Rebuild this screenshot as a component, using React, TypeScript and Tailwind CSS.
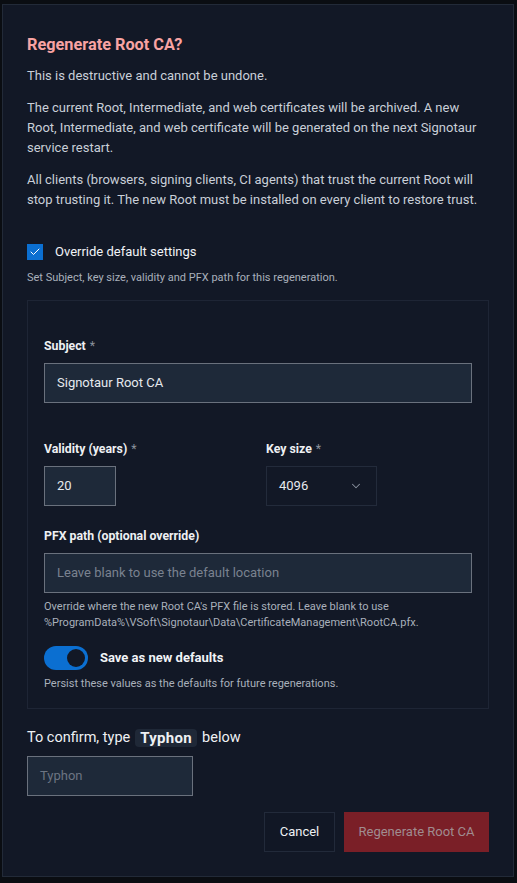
import { Check, ChevronDown } from "lucide-react";

const font = { fontFamily: 'Roboto, "Noto Sans", sans-serif' };

const labelCls = "text-[12.3px] font-bold leading-[18px] text-[#eef0f3]";
const inputBase = "flex h-10 items-center border border-[#6a717d] bg-[#1e2939] px-3 text-[13px]";
const helpCls = "text-[11px] leading-4 text-[#a9b0bb]";

function Req() {
  return <span className="ml-1 font-normal text-[#8a919c]">*</span>;
}

export default function App() {
  return (
    <div className="min-h-screen w-full bg-[#0a0d12] pl-[2px] pt-[4px]" style={font}>
      <div className="h-[873px] w-[512px] border border-[#222a38] bg-[#121826] px-6 pt-[28px]">
        <h2 className="text-[16.3px] font-bold leading-6 text-[#f8a3a3]">Regenerate Root CA?</h2>

        <div className="mt-[9px] flex flex-col gap-3 text-[13px] leading-5 text-[#c9cfd8]">
          <p>This is destructive and cannot be undone.</p>
          <p>
            The current Root, Intermediate, and web certificates will be archived. A new Root,
            Intermediate, and web certificate will be generated on the next Signotaur service
            restart.
          </p>
          <p>
            All clients (browsers, signing clients, CI agents) that trust the current Root will
            stop trusting it. The new Root must be installed on every client to restore trust.
          </p>
        </div>

        <label className="mt-8 flex h-5 items-center gap-3">
          <span className="flex h-4 w-4 items-center justify-center bg-[#0b6fd1]">
            <Check className="h-3 w-3 text-white" strokeWidth={2} />
          </span>
          <span className="text-[13px] text-[#f1f3f6]">Override default settings</span>
        </label>
        <p className={`mt-2 ${helpCls}`}>
          Set Subject, key size, validity and PFX path for this regeneration.
        </p>

        <div className="mt-[14px] border border-[#1e2535] px-4 pb-4 pt-9">
          <div className={labelCls}>
            Subject
            <Req />
          </div>
          <div className={`mt-2 ${inputBase} text-[#e6e9ee]`}>Signotaur Root CA</div>

          <div className="mt-[37px] grid grid-cols-2 gap-4">
            <div>
              <div className={labelCls}>
                Validity (years)
                <Req />
              </div>
              <div className={`mt-2 w-[72px] ${inputBase} text-[#e6e9ee]`}>20</div>
            </div>
            <div>
              <div className={labelCls}>
                Key size
                <Req />
              </div>
              <div className="mt-2 flex h-10 w-[111px] items-center justify-between border border-[#232b3b] bg-[#121826] pl-3 pr-[13px] text-[13px] text-[#e6e9ee]">
                4096
                <ChevronDown className="h-[14px] w-[14px] text-[#8b93a0]" strokeWidth={1.75} />
              </div>
            </div>
          </div>

          <div className={`mt-[21px] ${labelCls}`}>PFX path (optional override)</div>
          <div className={`mt-2 ${inputBase} text-[#7a8290]`}>
            Leave blank to use the default location
          </div>
          <p className={`mt-[6px] ${helpCls}`}>
            Override where the new Root CA's PFX file is stored. Leave blank to use
            <br />
            %ProgramData%\VSoft\Signotaur\Data\CertificateManagement\RootCA.pfx.
          </p>

          <div className="mt-[15px] flex items-center gap-3">
            <span className="flex h-6 w-11 items-center justify-end rounded-full bg-[#0b6fd1] p-[3px]">
              <span className="h-[18px] w-[18px] rounded-full bg-[#121826]" />
            </span>
            <span className="text-[13px] font-bold text-[#f1f3f6]">Save as new defaults</span>
          </div>
          <p className={`mt-[6px] ${helpCls}`}>
            Persist these values as the defaults for future regenerations.
          </p>
        </div>

        <div className="mt-[19px] flex h-5 items-center text-[14.5px] text-[#eef0f3]">
          To confirm, type
          <span className="mx-[5px] rounded-[4px] bg-[#1f2837] px-[5px] text-[15px] font-bold leading-[18px] tracking-[0.3px]">
            Typhon
          </span>
          below
        </div>
        <div className={`mt-2 w-[166px] ${inputBase} text-[#6c7482]`}>Typhon</div>

        <div className="mt-4 flex justify-end gap-[9px]">
          <button className="h-10 w-[71px] border border-[#222a3a] bg-[#111725] text-[13px] text-[#eef0f3]">
            Cancel
          </button>
          <button className="h-10 w-[145px] bg-[#7a1f27] text-[13px] text-[#a08c90]">
            Regenerate Root CA
          </button>
        </div>
      </div>
    </div>
  );
}
